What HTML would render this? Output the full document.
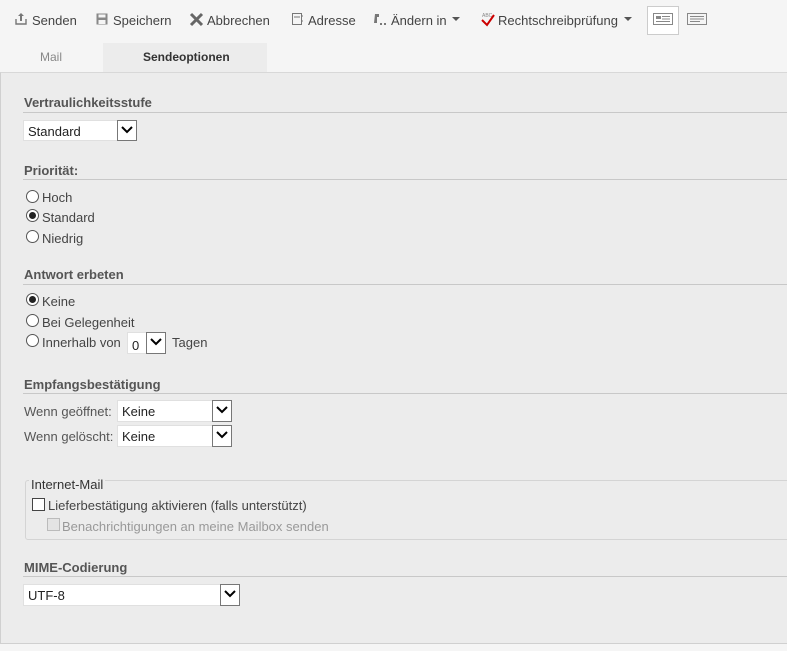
<!DOCTYPE html><html><head><meta charset="utf-8"><style>
*{margin:0;padding:0;box-sizing:border-box}
body{width:787px;height:651px;background:#f5f5f5;font-family:"Liberation Sans",sans-serif;font-size:13px;color:#333;position:relative;overflow:hidden}
.a{position:absolute;white-space:nowrap}
.tb{color:#444;font-size:13px;top:13px}
.h{font-weight:bold;color:#555;font-size:13px}
.ln{position:absolute;left:23px;right:0;height:1px;background:#c8c8c8}
.sel{position:absolute;background:#fff;border:1px solid #e0e0e0;font-size:13px;color:#222;padding:3px 0 0 4px}
.dd{position:absolute;top:-1px;right:-1px;width:20px;bottom:-1px;border:1px solid #777;background:#fff}
.dd svg{position:absolute;left:3px;top:5px}
.r{position:absolute;width:13px;height:13px;border:1px solid #555;border-radius:50%;background:#fff}
.r.on::after{content:"";position:absolute;left:2px;top:2px;width:7px;height:7px;border-radius:50%;background:#222}
.lbl{color:#444}
</style></head><body>
<svg class="a" style="left:15px;top:12px" width="12" height="13" viewBox="0 0 12 13"><path d="M6 1L3 4h2v5h2V4h2z" fill="#777"/><path d="M1 7v5h10V7" fill="none" stroke="#777" stroke-width="1.4"/></svg>
<div class="a tb" style="left:32px">Senden</div>
<svg class="a" style="left:96px;top:13px" width="12" height="12"><rect x="0.5" y="0.5" width="11" height="11" fill="#888"/><rect x="2.5" y="1.5" width="7" height="3" fill="#f5f5f5"/><rect x="2.5" y="7" width="7" height="4" fill="#f5f5f5"/></svg>
<div class="a tb" style="left:113px">Speichern</div>
<svg class="a" style="left:189px;top:12px" width="15" height="15"><path d="M2 2L13 13M13 2L2 13" stroke="#666" stroke-width="3"/></svg>
<div class="a tb" style="left:207px">Abbrechen</div>
<svg class="a" style="left:291px;top:12px" width="13" height="14"><rect x="1.5" y="1.5" width="9" height="11" fill="none" stroke="#777"/><path d="M3 5h6M10 4h2M10 9h2" stroke="#777"/></svg>
<div class="a tb" style="left:308px">Adresse</div>
<svg class="a" style="left:372px;top:12px" width="16" height="14"><path d="M3 2h4v3H5v6H2z" fill="#777"/><rect x="8" y="11" width="2" height="2" fill="#777"/><rect x="12" y="11" width="2" height="2" fill="#777"/></svg>
<div class="a tb" style="left:391px">Ändern in</div>
<svg class="a" style="left:452px;top:17px" width="9" height="5"><path d="M0 0h8L4 4z" fill="#555"/></svg>
<svg class="a" style="left:481px;top:12px" width="14" height="15"><text x="1" y="5" font-size="5" fill="#888" font-family="Liberation Sans">ABC</text><path d="M1 8l5 5 7-10" fill="none" stroke="#c00" stroke-width="2"/></svg>
<div class="a tb" style="left:498px">Rechtschreibprüfung</div>
<svg class="a" style="left:624px;top:17px" width="9" height="5"><path d="M0 0h8L4 4z" fill="#555"/></svg>
<div class="a" style="left:647px;top:6px;width:32px;height:29px;border:1px solid #ccc;background:#fff"></div>
<svg class="a" style="left:653px;top:13px" width="21" height="13"><rect x="0.5" y="0.5" width="19" height="11" fill="none" stroke="#888"/><rect x="3" y="3" width="5" height="3" fill="#888"/><path d="M9 3.5h8M9 6h8M3 8.5h14" stroke="#888"/></svg>
<svg class="a" style="left:687px;top:13px" width="21" height="13"><rect x="0.5" y="0.5" width="19" height="11" fill="none" stroke="#888"/><path d="M3 3.5h14M3 6h14M3 8.5h10" stroke="#888"/></svg>
<div class="a" style="left:103px;top:43px;width:164px;height:30px;background:#ececec"></div>
<div class="a" style="left:40px;top:50px;color:#888;font-size:12px">Mail</div>
<div class="a" style="left:143px;top:50px;color:#333;font-size:12px;font-weight:bold">Sendeoptionen</div>
<div class="a" style="left:0;top:72px;width:787px;height:572px;background:#ececec;border-top:1px solid #d8d8d8;border-left:1px solid #d0d0d0;border-bottom:1px solid #d0d0d0"></div>

<div class="a h" style="left:24px;top:95px">Vertraulichkeitsstufe</div><div class="ln" style="top:112px"></div>
<div class="sel" style="left:23px;top:120px;width:114px;height:21px">Standard<div class="dd"><svg width="12" height="8"><path d="M1 1l5 5 5-5" fill="none" stroke="#000" stroke-width="2"/></svg></div></div>

<div class="a h" style="left:24px;top:163px">Priorität:</div><div class="ln" style="top:179px"></div>
<div class="r" style="left:26px;top:190px"></div><div class="a lbl" style="left:42px;top:190px">Hoch</div>
<div class="r on" style="left:26px;top:209px"></div><div class="a lbl" style="left:42px;top:210px">Standard</div>
<div class="r" style="left:26px;top:230px"></div><div class="a lbl" style="left:42px;top:231px">Niedrig</div>

<div class="a h" style="left:24px;top:267px">Antwort erbeten</div><div class="ln" style="top:284px"></div>
<div class="r on" style="left:26px;top:293px"></div><div class="a lbl" style="left:42px;top:294px">Keine</div>
<div class="r" style="left:26px;top:314px"></div><div class="a lbl" style="left:42px;top:315px">Bei Gelegenheit</div>
<div class="r" style="left:26px;top:334px"></div><div class="a lbl" style="left:42px;top:335px">Innerhalb von</div>
<div class="sel" style="left:127px;top:332px;width:39px;height:22px;padding-top:5px">0<div class="dd"><svg width="12" height="8"><path d="M1 1l5 5 5-5" fill="none" stroke="#000" stroke-width="2"/></svg></div></div>
<div class="a lbl" style="left:172px;top:335px">Tagen</div>

<div class="a h" style="left:24px;top:377px">Empfangsbestätigung</div><div class="ln" style="top:393px"></div>
<div class="a lbl" style="left:24px;top:404px;color:#555">Wenn geöffnet:</div>
<div class="sel" style="left:117px;top:400px;width:115px;height:22px">Keine<div class="dd"><svg width="12" height="8"><path d="M1 1l5 5 5-5" fill="none" stroke="#000" stroke-width="2"/></svg></div></div>
<div class="a lbl" style="left:24px;top:429px;color:#555">Wenn gelöscht:</div>
<div class="sel" style="left:117px;top:425px;width:115px;height:22px">Keine<div class="dd"><svg width="12" height="8"><path d="M1 1l5 5 5-5" fill="none" stroke="#000" stroke-width="2"/></svg></div></div>

<div class="a" style="left:25px;top:480px;width:770px;height:60px;border:1px solid #d4d4d4;border-radius:3px"></div>
<div class="a" style="left:29px;top:477px;background:#ececec;padding:0 2px;color:#333">Internet-Mail</div>
<div class="a" style="left:32px;top:498px;width:13px;height:13px;border:1px solid #444;background:#fff"></div>
<div class="a" style="left:48px;top:498px;color:#444">Lieferbestätigung aktivieren (falls unterstützt)</div>
<div class="a" style="left:47px;top:518px;width:13px;height:13px;border:1px solid #bbb;background:#e4e4e4"></div>
<div class="a" style="left:62px;top:519px;color:#999">Benachrichtigungen an meine Mailbox senden</div>

<div class="a h" style="left:24px;top:560px">MIME-Codierung</div><div class="ln" style="top:576px"></div>
<div class="sel" style="left:23px;top:584px;width:217px;height:22px">UTF-8<div class="dd"><svg width="12" height="8"><path d="M1 1l5 5 5-5" fill="none" stroke="#000" stroke-width="2"/></svg></div></div>
</body></html>
